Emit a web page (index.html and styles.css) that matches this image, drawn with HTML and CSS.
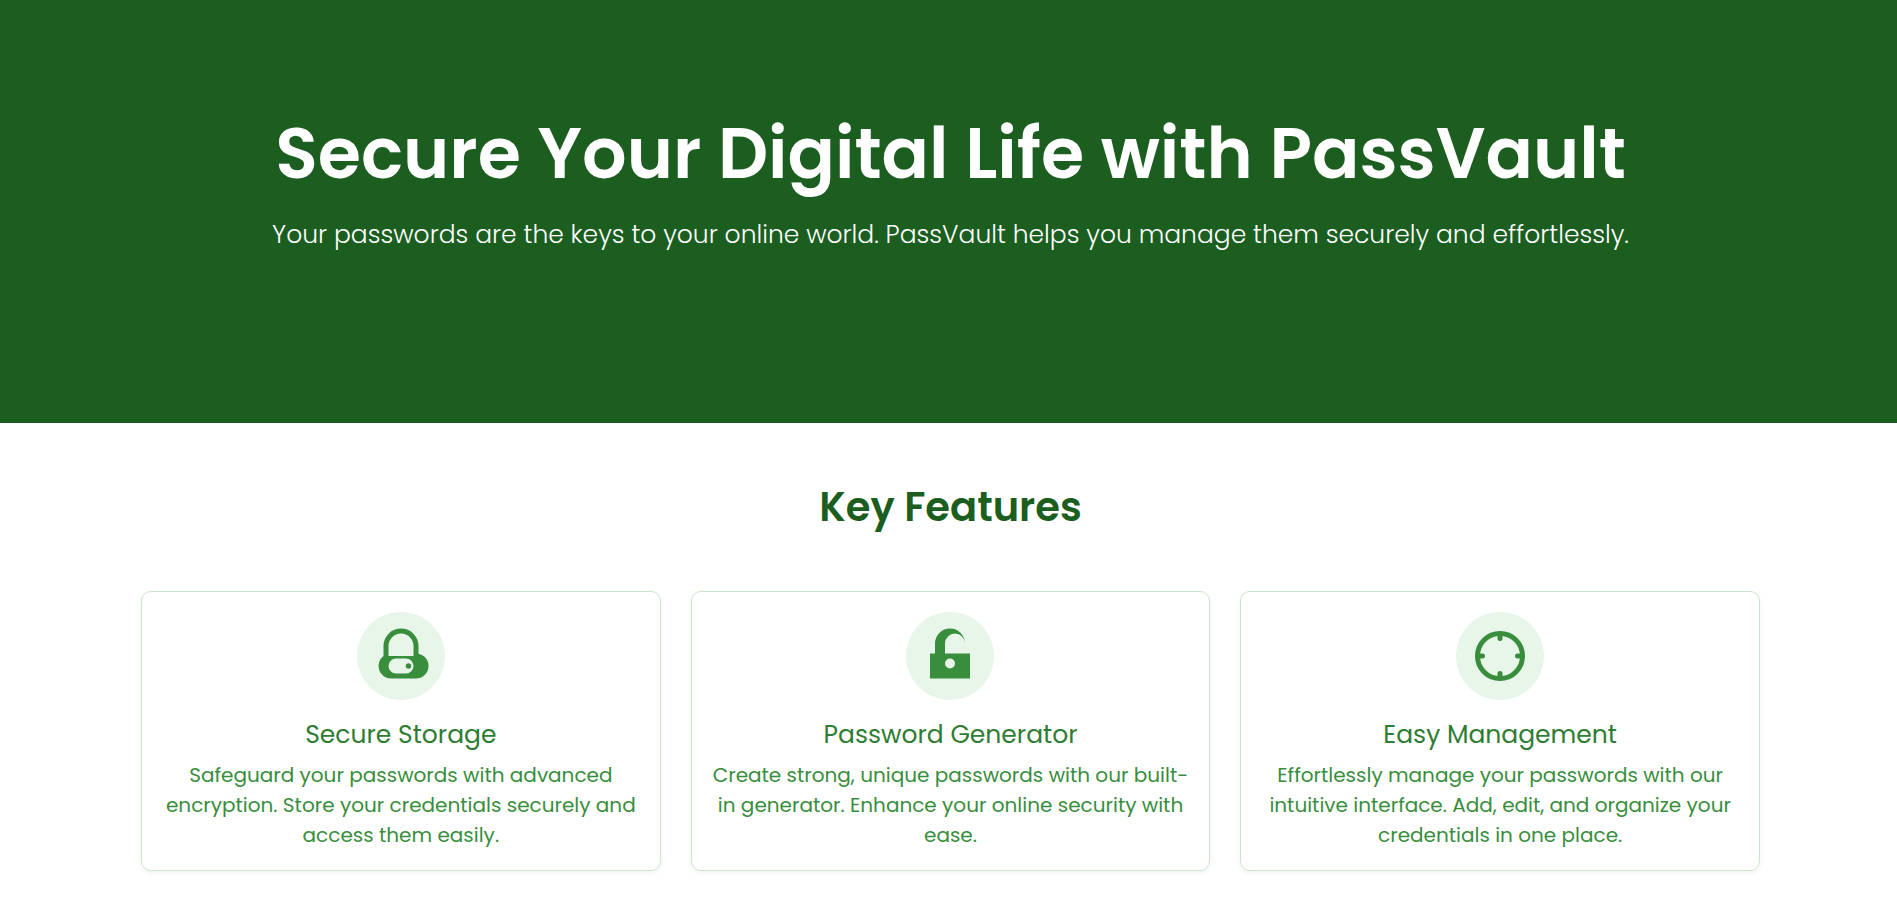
FILE: index.html
```html
<!DOCTYPE html>
<html lang="en">
<head>
<meta charset="utf-8">
<meta name="viewport" content="width=device-width, initial-scale=1">
<title>PassVault</title>
<link rel="stylesheet" href="styles.css">
</head>
<body>
<header class="hero">
  <h1 class="hero-title">Secure Your Digital Life with PassVault</h1>
  <p class="hero-text">Your passwords are the keys to your online world. PassVault helps you manage them securely and effortlessly.</p>
</header>
<main class="features">
  <h2 class="features-title">Key Features</h2>
  <div class="cards">
    <article class="card">
      <div class="icon">
        <svg viewBox="0 0 24 24" aria-hidden="true"><path fill-rule="evenodd" d="M12 1a7 7 0 0 0-7 7v4a5 5 0 0 0 3 9h10a5 5 0 0 0 1-9.900V8a7 7 0 0 0-7-7zM7 12V8a5 5 0 0 1 10 0v4zM10 13h4a3 3 0 0 1 0 6h-4a3 3 0 0 1 0-6z"/><circle cx="15" cy="16" r="1.100"/></svg>
      </div>
      <h3 class="card-title">Secure Storage</h3>
      <p class="card-text">Safeguard your passwords with advanced encryption. Store your credentials securely and access them easily.</p>
    </article>
    <article class="card">
      <div class="icon">
        <svg viewBox="0 0 24 24" aria-hidden="true"><path fill-rule="evenodd" d="M12 1a6 6 0 0 0-6 6v4H4v10h16V11H10V7a4 4 0 0 1 8 0a6 6 0 0 0-6-6zM12 13a2 2 0 1 1 0 4a2 2 0 0 1 0-4z"/></svg>
      </div>
      <h3 class="card-title">Password Generator</h3>
      <p class="card-text">Create strong, unique passwords with our built-in generator. Enhance your online security with ease.</p>
    </article>
    <article class="card">
      <div class="icon">
        <svg class="outline" viewBox="0 0 24 24" aria-hidden="true"><circle cx="12" cy="12" r="9"/><path d="M12 3v2M12 19v2M3 12h2M19 12h2"/></svg>
      </div>
      <h3 class="card-title">Easy Management</h3>
      <p class="card-text">Effortlessly manage your passwords with our intuitive interface. Add, edit, and organize your credentials in one place.</p>
    </article>
  </div>
</main>
</body>
</html>
```
FILE: styles.css
```css
* {
  box-sizing: border-box;
}

body {
  margin: 0;
  background: #fff;
  font-family: Poppins, Inter, "Open Sans", sans-serif;
  text-align: center;
}

h1,
h2,
h3,
p {
  margin: 0;
}

.hero {
  padding: 101px 20px 168px 24px;
  background: #1b5e20;
  color: #fff;
}

.hero-title {
  font-size: 70px;
  font-weight: 600;
  line-height: 105px;
}

.hero-text {
  margin-top: 9px;
  font-size: 25px;
  font-weight: 300;
  line-height: 40px;
}

.features {
  padding: 54px 20px 32px 24px;
}

.features-title {
  color: #1b5e20;
  font-size: 40px;
  font-weight: 600;
  line-height: 60px;
}

.cards {
  display: grid;
  grid-template-columns: repeat(3, 1fr);
  gap: 30px;
  max-width: 1619px;
  margin: 54px auto 0;
}

.card {
  padding: 20px;
  border: 1px solid #c8e6c9;
  border-radius: 10px;
  box-shadow: 0 2px 5px rgba(0, 0, 0, 0.06);
}

.icon {
  display: flex;
  align-items: center;
  justify-content: center;
  width: 88px;
  height: 88px;
  margin: 0 auto;
  border-radius: 50%;
  background: #e8f5e9;
}

.icon svg {
  width: 60px;
  height: 60px;
  fill: #388e3c;
}

.icon .outline {
  fill: none;
  stroke: #388e3c;
  stroke-width: 2;
  stroke-linecap: round;
}

.card-title {
  margin-top: 15px;
  color: #2e7d32;
  font-size: 25px;
  font-weight: 400;
  line-height: 40px;
}

.card-text {
  margin-top: 5px;
  color: #388e3c;
  font-size: 20px;
  line-height: 30px;
}

@media (max-width: 1000px) {
  .cards {
    grid-template-columns: 1fr;
  }
}
```
